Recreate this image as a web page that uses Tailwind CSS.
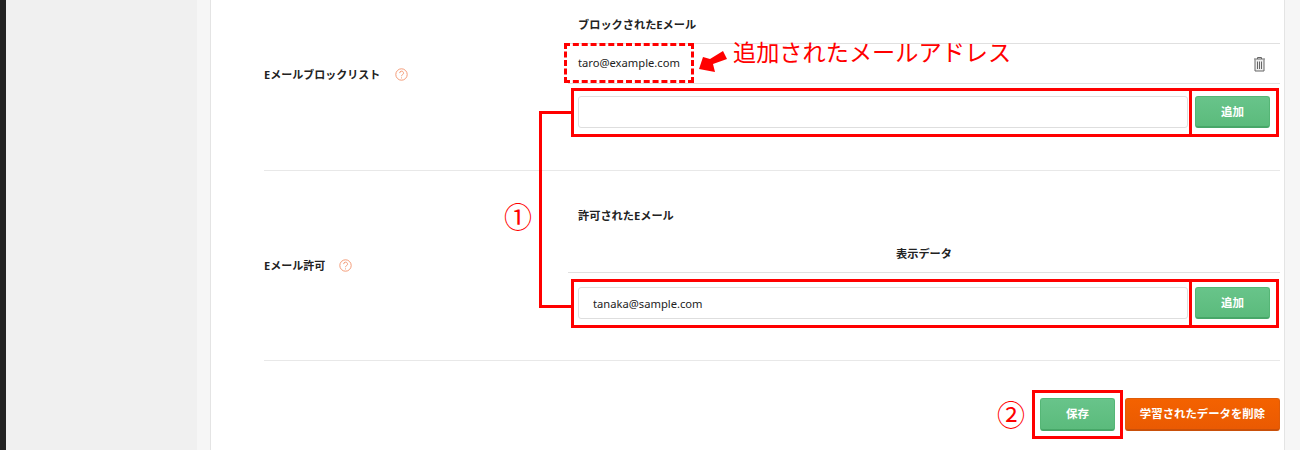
<!DOCTYPE html>
<html lang="ja">
<head>
<meta charset="UTF-8">
<title>Eメールブロックリスト</title>
<script src="https://cdn.jsdelivr.net/npm/@tailwindcss/browser@4"></script>
</head>
<body class="bg-white">
<div class="relative flex w-[1300px] h-[450px] overflow-hidden font-['Noto_Sans','Noto_Sans_CJK_JP',sans-serif] text-[#222]">
    <div class="w-[6px] bg-[#222]"></div>
    <div class="w-[191px] bg-[#f0f0f0]"></div>
    <div class="w-[14px] bg-[#f6f6f6] border-r border-[#e4e4e4]"></div>

    <main class="w-[1073px] bg-white pl-[53px] pr-[4px]">
        <section class="flex h-[171px] border-b border-[#e8e8e8]">
            <div class="w-[304px] pt-[66px] flex items-start text-[11px] leading-[18px] font-bold">
                <span class="w-[131px]">Eメールブロックリスト</span>
                <svg class="w-[13px] h-[13px] mt-[2px]" viewBox="0 0 13 13" fill="none" stroke="#f49c78"><circle cx="6.5" cy="6.5" r="5.7"/><path d="M4.7 5.1a1.9 1.9 0 1 1 2.8 1.6c-.7.4-1 .8-1 1.5M6.5 9.4v1"/></svg>
            </div>
            <div class="flex-1">
                <h3 class="pl-[10px] pt-[16px] h-[44px] text-[11.2px] leading-[18px] font-bold border-b border-[#e0e0e0]">ブロックされたEメール</h3>
                <div class="flex items-center justify-between h-[40px] pl-[10px] pr-[14px] border-b border-[#e0e0e0] text-[11.2px]">
                    <span>taro@example.com</span>
                    <svg class="w-[13px] h-[16px]" viewBox="0 0 13 16" fill="#eee" stroke="#666"><path d="M1 3h11M4.5 3V1.5h4V3M2 3.5V15h9V3.5"/><path d="M4.5 5.5v7.5M6.5 5.5v7.5M8.5 5.5v7.5"/></svg>
                </div>
                <div class="flex pl-[10px] pr-[10px] pt-[12px]">
                    <input type="text" class="w-[610px] h-[32px] bg-white border border-[#dedede] rounded-[3px]">
                    <button class="ml-[7px] w-[75px] h-[32px] rounded-[3px] bg-linear-to-b from-[#68c48a] to-[#5bbb7c] border border-[#55b676] border-b-2 border-b-[#47a768] text-white text-[11.5px] font-bold">追加</button>
                </div>
            </div>
        </section>

        <section class="flex h-[190px] border-b border-[#e8e8e8]">
            <div class="w-[304px] pt-[86px] flex items-start text-[11px] leading-[18px] font-bold">
                <span class="w-[75px]">Eメール許可</span>
                <svg class="w-[13px] h-[13px] mt-[2px]" viewBox="0 0 13 13" fill="none" stroke="#f49c78"><circle cx="6.5" cy="6.5" r="5.7"/><path d="M4.7 5.1a1.9 1.9 0 1 1 2.8 1.6c-.7.4-1 .8-1 1.5M6.5 9.4v1"/></svg>
            </div>
            <div class="flex-1">
                <h3 class="pl-[10px] pt-[36px] h-[64px] text-[11.2px] leading-[18px] font-bold">許可されたEメール</h3>
                <div class="h-[38px] pt-[10px] text-center text-[11.2px] leading-[18px] font-bold border-b border-[#e0e0e0] w-[712px]">表示データ</div>
                <div class="flex pl-[10px] pr-[10px] pt-[14px]">
                    <input type="text" value="tanaka@sample.com" class="w-[610px] h-[32px] pl-[14px] bg-white border border-[#dedede] rounded-[3px] text-[11.2px]">
                    <button class="ml-[7px] w-[75px] h-[32px] rounded-[3px] bg-linear-to-b from-[#68c48a] to-[#5bbb7c] border border-[#55b676] border-b-2 border-b-[#47a768] text-white text-[11.5px] font-bold">追加</button>
                </div>
            </div>
        </section>

        <div class="flex justify-end gap-[10px] pt-[37px]">
            <button class="w-[75px] h-[33px] rounded-[3px] bg-linear-to-b from-[#68c48a] to-[#5bbb7c] border border-[#55b676] border-b-2 border-b-[#47a768] text-white text-[11.5px] font-bold">保存</button>
            <button class="w-[155px] h-[33px] rounded-[3px] bg-linear-to-b from-[#f46200] to-[#ea5a02] border border-[#e05c08] border-b-2 border-b-[#c9500a] text-white text-[11.4px] font-bold">学習されたデータを削除</button>
        </div>
    </main>

    <div class="flex-1 bg-[#f6f6f6] border-l border-[#e4e4e4]"></div>

    <!-- annotations on top of the screenshot -->
    <div class="absolute left-[564px] top-[43px] w-[130px] h-[40px] border-[3px] border-dashed border-[#f00]"></div>
    <svg class="absolute left-[698px] top-[50px] w-[30px] h-[24px]" viewBox="0 0 30 24" fill="#f00"><path d="M1 19 5 7l7 2L25 1l4 8-14 5 2 8z"/></svg>
    <div class="absolute left-[733px] top-[36px] text-[23.2px] leading-[32px] text-[#f00]">追加されたメールアドレス</div>
    <div class="absolute left-[571px] top-[88px] w-[621px] h-[49px] border-[3px] border-[#f00]"></div>
    <div class="absolute left-[1189px] top-[88px] w-[90px] h-[49px] border-[3px] border-[#f00]"></div>
    <div class="absolute left-[571px] top-[279px] w-[621px] h-[49px] border-[3px] border-[#f00]"></div>
    <div class="absolute left-[1189px] top-[279px] w-[90px] h-[49px] border-[3px] border-[#f00]"></div>
    <div class="absolute left-[539px] top-[111px] w-[33px] h-[197px] border-[3px] border-r-0 border-[#f00]"></div>
    <div class="absolute left-[504px] top-[199px] text-[28px] leading-[36px] text-[#f00]">①</div>
    <div class="absolute left-[997px] top-[397px] text-[28px] leading-[36px] text-[#f00]">②</div>
    <div class="absolute left-[1032px] top-[390px] w-[91px] h-[49px] border-[3px] border-[#f00]"></div>
</div>
</body>
</html>
